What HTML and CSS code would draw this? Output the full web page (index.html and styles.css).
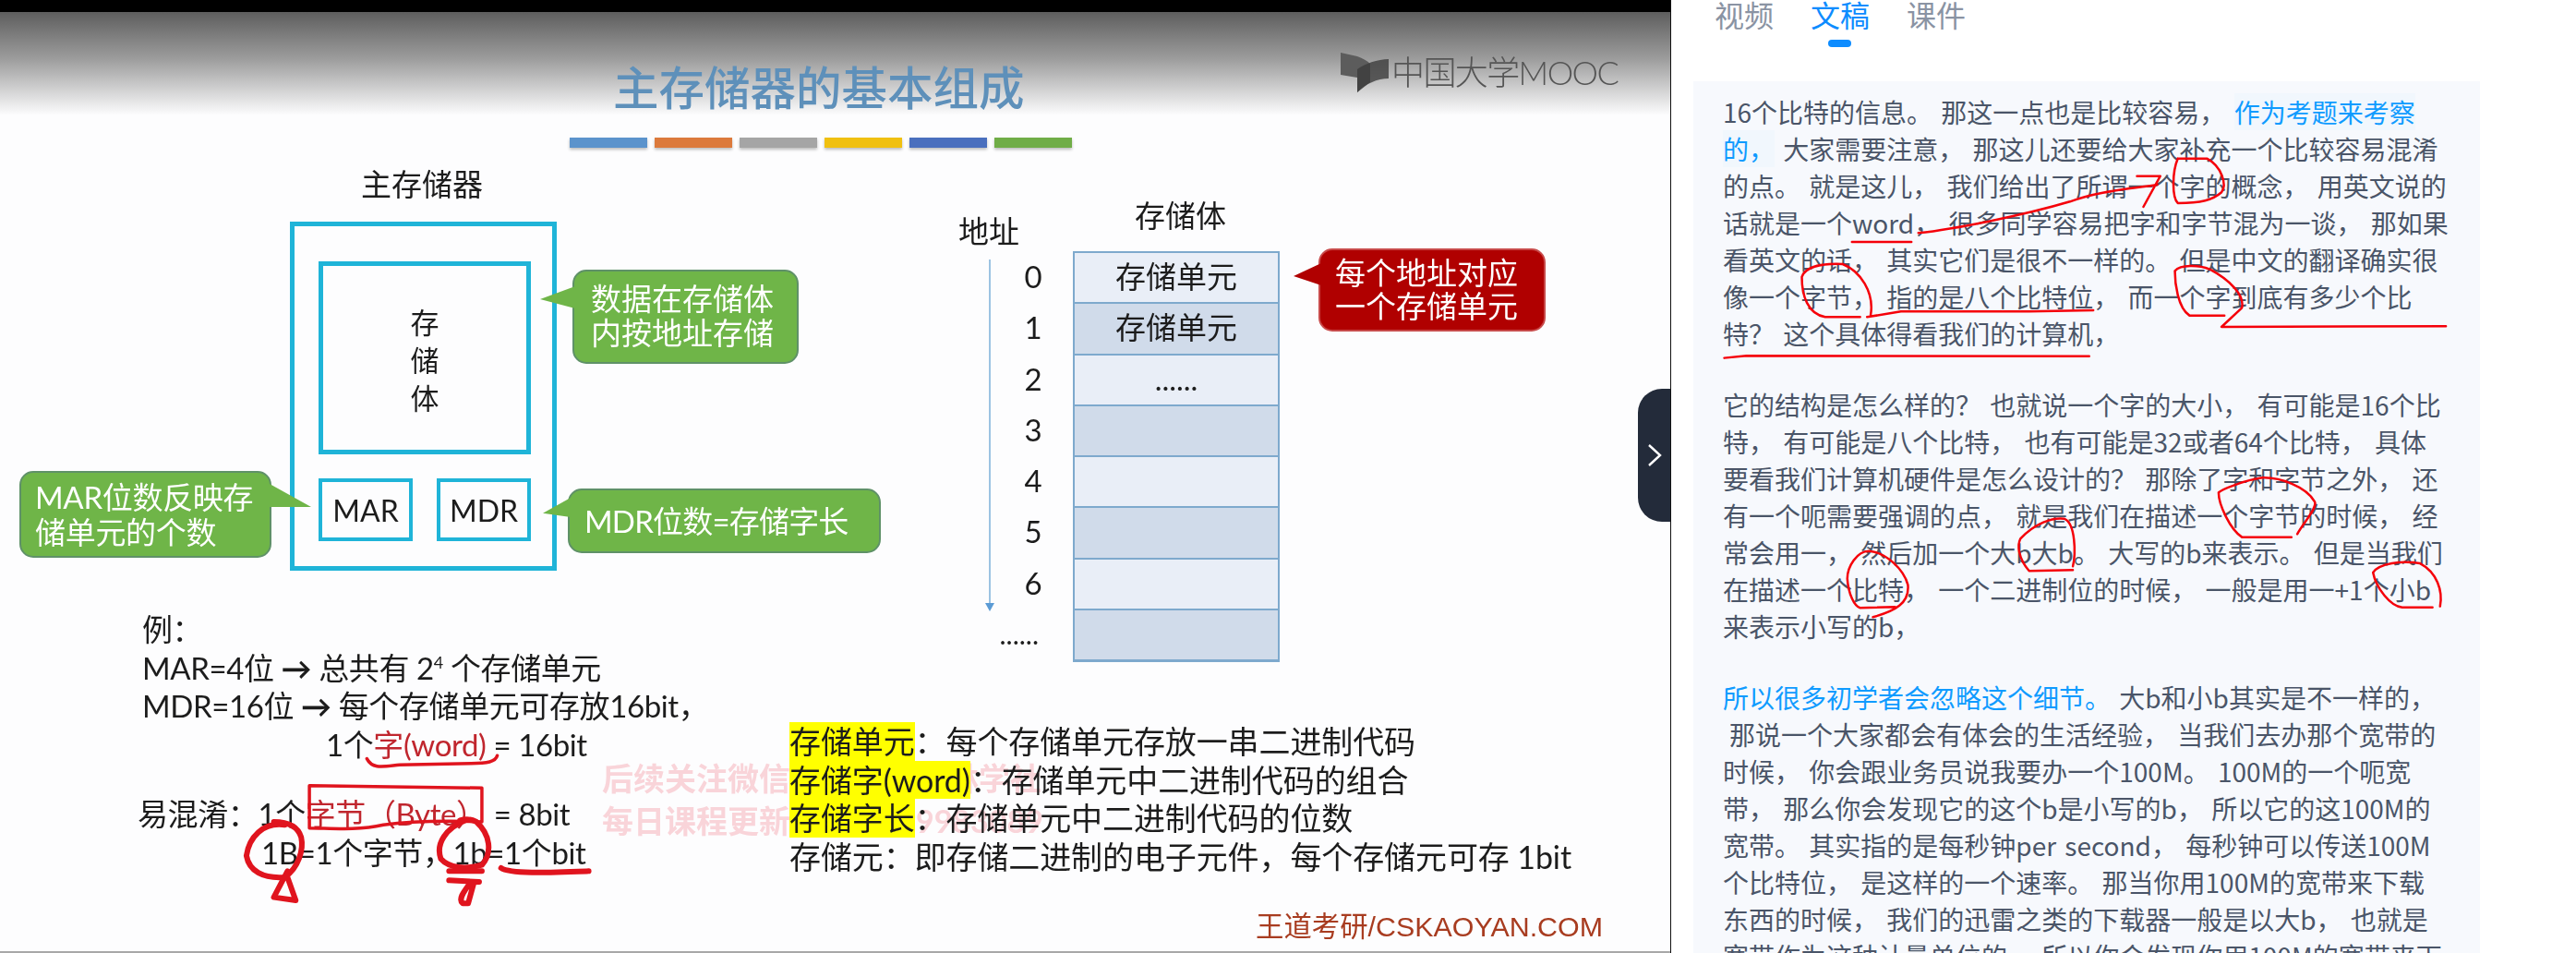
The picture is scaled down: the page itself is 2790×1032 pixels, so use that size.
FILE: index.html
```html
<!DOCTYPE html>
<html lang="zh">
<head>
<meta charset="utf-8">
<title>主存储器的基本组成</title>
<link rel="stylesheet" href="styles.css">
</head>
<body>
<div class="page">
  <section class="video">
    <div class="topbar"></div>
    <div class="slide">
      <div class="shade"></div>
      <h1 class="title">主存储器的基本组成</h1>
      <div class="bars"><i class="b1"></i><i class="b2"></i><i class="b3"></i><i class="b4"></i><i class="b5"></i><i class="b6"></i></div>
      <div class="logo">
        <svg class="logo-icon" viewBox="0 0 52 43"><path d="M0 0L18 4C24 6 29 9 32 12V32L18 43V27L0 24Z" fill="#5c5c5c"/><path d="M18 18C26 12 40 7 52 7V28C40 28 26 34 18 43Z" fill="#3c3c3c" fill-opacity=".8"/></svg>
        <span class="logo-text">中国大学MOOC</span>
      </div>

      <div class="label main-label">主存储器</div>
      <div class="outer"></div>
      <div class="inner">存<br>储<br>体</div>
      <div class="reg mar">MAR</div>
      <div class="reg mdr">MDR</div>
      <div class="callout c-data">数据在存储体<br>内按地址存储</div>
      <div class="callout c-mar">MAR位数反映存<br>储单元的个数</div>
      <div class="callout c-mdr">MDR位数=存储字长</div>

      <div class="label addr-label">地址</div>
      <div class="label store-label">存储体</div>
      <div class="axis"></div>
      <div class="addrs"><span>0</span><span>1</span><span>2</span><span>3</span><span>4</span><span>5</span><span>6</span><span class="more">......</span></div>
      <div class="cells">
        <div class="cell light">存储单元</div>
        <div class="cell dark">存储单元</div>
        <div class="cell light">......</div>
        <div class="cell dark"></div>
        <div class="cell light"></div>
        <div class="cell dark"></div>
        <div class="cell light"></div>
        <div class="cell dark"></div>
      </div>
      <div class="callout c-red">每个地址对应<br>一个存储单元</div>

      <div class="watermark">后续关注微信公众号：森林学社<br>每日课程更新加群:1289983089</div>

      <div class="example">
        <div>例：</div>
        <div>MAR=4位 <b>→</b> 总共有 2<sup>4</sup> 个存储单元</div>
        <div>MDR=16位 <b>→</b> 每个存储单元可存放16bit，</div>
        <div class="ind1">1个<em>字(word)</em> = 16bit</div>
        <div class="gap">易混淆：1个<em>字节（Byte）</em> = 8bit</div>
        <div class="ind2">1B=1个字节，1b=1个bit</div>
      </div>

      <div class="terms">
        <div><mark>存储单元</mark>：每个存储单元存放一串二进制代码</div>
        <div><mark>存储字(word)</mark>：存储单元中二进制代码的组合</div>
        <div><mark>存储字长</mark>：存储单元中二进制代码的位数</div>
        <div>存储元：即存储二进制的电子元件，每个存储元可存 1bit</div>
      </div>
      <div class="brand">王道考研/CSKAOYAN.COM</div>
    </div>
    <button class="handle" aria-label="收起"><svg viewBox="0 0 16 24"><path d="M2 1L14 12L2 23" fill="none" stroke="#fff" stroke-width="2.4"/></svg></button>
  </section>

  <aside class="side">
    <nav class="tabs">
      <a class="tab">视频</a>
      <a class="tab active">文稿</a>
      <a class="tab">课件</a>
    </nav>
    <div class="doc">
      <p>16个比特的信息。 那这一点也是比较容易， <span class="hl tint">作为考题来考察<br>的，</span> 大家需要注意， 那这儿还要给大家补充一个比较容易混淆<br>的点。 就是这儿， 我们给出了所谓一个字的概念， 用英文说的<br>话就是一个word， 很多同学容易把字和字节混为一谈， 那如果<br>看英文的话， 其实它们是很不一样的。 但是中文的翻译确实很<br>像一个字节， 指的是八个比特位， 而一个字到底有多少个比<br>特？ 这个具体得看我们的计算机，</p>
      <p>它的结构是怎么样的？ 也就说一个字的大小， 有可能是16个比<br>特， 有可能是八个比特， 也有可能是32或者64个比特， 具体<br>要看我们计算机硬件是怎么设计的？ 那除了字和字节之外， 还<br>有一个呃需要强调的点， 就是我们在描述一个字节的时候， 经<br>常会用一， 然后加一个大b大b。 大写的b来表示。 但是当我们<br>在描述一个比特， 一个二进制位的时候， 一般是用一+1个小b<br>来表示小写的b，</p>
      <p><span class="hl">所以很多初学者会忽略这个细节。</span> 大b和小b其实是不一样的，<br><span class="nudge">那说一个大家都会有体会的生活经验， 当我们去办那个宽带的</span><br>时候， 你会跟业务员说我要办一个100M。 100M的一个呃宽<br>带， 那么你会发现它的这个b是小写的b， 所以它的这100M的<br>宽带。 其实指的是每秒钟per second， 每秒钟可以传送100M<br>个比特位， 是这样的一个速率。 那当你用100M的宽带来下载<br>东西的时候， 我们的迅雷之类的下载器一般是以大b， 也就是<br>宽带作为这种计量单位的， 所以你会发现你用100M的宽带来下</p>
    </div>
  </aside>
</div>

<svg class="ink" viewBox="0 0 2790 1032" aria-hidden="true">
  <g transform="matrix(0.5931,0,0,0.3333,0,640)" class="pen-v">
    <path class="thin" d="M670 545C680 580 700 570 730 565L860 560C890 560 905 555 908 535"/>
    <path class="thin" d="M565 632L880 640L880 750C800 745 740 750 700 760C650 780 600 770 565 770Z"/>
    <path d="M520 760C480 750 455 800 450 860C455 910 480 935 520 930C545 900 555 840 550 800C545 770 530 750 500 750"/>
    <path d="M850 745C815 770 795 820 805 870C820 900 850 905 880 890C900 850 895 790 870 750C860 740 850 740 840 745"/>
    <path d="M915 900C930 920 1000 915 1075 910"/>
    <path d="M820 910L880 910M820 940L875 945M860 945C850 970 835 1000 845 1015L855 1015L865 950"/>
    <path d="M525 910L500 995L540 1005L525 930"/>
  </g>
  <g transform="matrix(0.6313,0,0,0.3333,1800,0)" class="pen-r">
    <path d="M326 786L428 786"/>
    <path d="M440 757C500 745 620 700 700 655C750 620 800 615 850 600M815 572L855 572L826 672"/>
    <path d="M885 515L935 515C960 540 970 600 960 625C945 650 925 660 885 660C875 640 875 560 885 515"/>
    <path d="M340 1030L280 1030C250 1020 240 960 240 900C245 870 270 855 310 858C340 880 365 950 358 1025M352 1030L410 1012L630 1012L740 1008"/>
    <path d="M965 1025L905 1025C885 1000 880 920 880 880C890 860 920 860 940 875C975 910 1000 960 995 1000L960 1062L1345 1060"/>
    <path d="M107 1163L145 1156L733 1157"/>
  </g>
  <g transform="matrix(0.6313,0,0,0.3333,1800,400)" class="pen-r">
    <path d="M1090 535C1100 500 1125 450 1120 430C1105 380 1060 350 1030 352C1000 360 960 390 955 400C955 440 975 520 995 545L1080 545"/>
    <path d="M705 652L630 655C610 610 610 570 615 550C640 500 670 480 690 485C710 500 710 600 705 640"/>
    <path d="M362 805C400 785 425 760 422 700C415 650 385 595 355 590C335 590 318 640 318 680C320 730 330 770 340 775L400 772"/>
    <path d="M1322 773L1270 773C1250 770 1225 710 1220 660C1230 630 1270 620 1300 630C1330 660 1340 720 1335 770"/>
  </g>
</svg>
</body>
</html>
```

FILE: styles.css
```css
* { box-sizing: border-box; }
html, body { margin: 0; padding: 0; }
body {
  position: relative;
  width: 2790px;
  height: 1032px;
  overflow: hidden;
  background: #fff;
  font-family: "Noto Sans CJK SC", sans-serif;
}
.page { display: flex; width: 2790px; height: 1032px; }

/* video */
.video {
  position: relative;
  flex: none;
  width: 1810px;
  height: 1032px;
  display: flex;
  flex-direction: column;
  border-right: 1px solid #111;
}
.topbar { flex: none; height: 13px; background: #000; }
.slide {
  position: relative;
  flex: 1;
  background: #fdfdfe;
  border-bottom: 2px solid #a8a8a8;
  font-family: Lato, "Noto Sans CJK SC", sans-serif;
  color: #1c1c1c;
  font-size: 33px;
  filter: blur(.6px);
}
.slide > * { position: absolute; }
.shade {
  left: 0; right: 0; top: 0; height: 112px;
  background: linear-gradient(#5e5e5e, #9c9c9c 45%, #fdfdfe);
}
.title {
  margin: 0;
  left: 664px; top: 47px;
  font-size: 49.5px;
  line-height: 70px;
  font-weight: 500;
  color: #5e90ba;
  white-space: nowrap;
}
.bars { left: 617px; top: 136px; display: flex; gap: 8px; }
.bars i { display: block; width: 84px; height: 11px; box-shadow: 0 2px 3px #bbb; }
.b1 { background: #5b93cc; }
.b2 { background: #dc7a3c; }
.b3 { background: #a5a5a5; }
.b4 { background: #f0c010; }
.b5 { background: #4a6fbe; }
.b6 { background: #70ad47; }
.logo { left: 1452px; top: 44px; display: flex; align-items: center; gap: 3px; color: #555; }
.logo-icon { width: 52px; height: 43px; }
.logo-text { font-size: 36px; line-height: 43px; font-weight: 300; letter-spacing: -1.6px; white-space: nowrap; }

.label { line-height: 40px; white-space: nowrap; }
.main-label { left: 391px; top: 166px; }
.addr-label { left: 1038px; top: 217px; }
.store-label { left: 1229px; top: 200px; }
.outer { left: 314px; top: 227px; width: 289px; height: 378px; border: 5px solid #1fb4d8; }
.inner {
  left: 345px; top: 270px; width: 230px; height: 209px;
  border: 5px solid #1fb4d8;
  padding-top: 41px;
  text-align: center;
  font-size: 31px;
  line-height: 41px;
}
.reg {
  top: 505px; width: 102px; height: 68px;
  border: 4px solid #1fb4d8;
  display: flex; align-items: center; justify-content: center;
  font-size: 32px;
}
.mar { left: 345px; }
.mdr { left: 473px; }
.callout { background: #6fb548; border: 2px solid #5f9168; border-radius: 15px; color: #fff; white-space: nowrap; letter-spacing: -.3px; }
.callout::before { content: ""; position: absolute; background: #6fb548; }
.c-data { left: 620px; top: 279px; width: 245px; height: 102px; padding: 11px 0 0 18px; line-height: 37px; letter-spacing: 0; }
.c-data::before { left: -37px; top: 16px; width: 38px; height: 24px; clip-path: polygon(100% 0, 0 58%, 100% 100%); }
.c-mar { left: 21px; top: 497px; width: 273px; height: 94px; padding: 7px 0 0 15px; line-height: 38px; }
.c-mar::before { left: 100%; top: 12px; width: 45px; height: 25px; clip-path: polygon(0 0, 100% 100%, 0 100%); }
.c-mdr { left: 615px; top: 516px; width: 339px; height: 70px; padding: 0 0 0 16px; line-height: 66px; letter-spacing: -.8px; }
.c-mdr::before { left: -29px; top: 8px; width: 30px; height: 21px; clip-path: polygon(100% 0, 0 80%, 100% 100%); }
.c-red { left: 1428px; top: 256px; width: 246px; height: 90px; background: #b00000; border-color: #c84a4a; padding: 6px 0 0 16px; line-height: 36px; letter-spacing: 0; }
.c-red::before { left: -29px; top: 14px; width: 30px; height: 24px; background: #b00000; clip-path: polygon(100% 0, 0 58%, 100% 100%); }

.axis { left: 1071px; top: 268px; width: 2px; height: 374px; background: #9cc3e2; }
.axis::after {
  content: ""; position: absolute; left: -4px; bottom: -7px;
  border-left: 5px solid transparent; border-right: 5px solid transparent; border-top: 9px solid #5b9bd5;
}
.addrs { left: 1100px; top: 259px; width: 38px; display: flex; flex-direction: column; }
.addrs span { height: 55.25px; line-height: 55px; text-align: center; }
.addrs .more { margin-left: -41px; width: 66px; line-height: 54px; font-size: 30px; text-align: right; }
.cells { left: 1162px; top: 259px; width: 224px; display: flex; flex-direction: column; border: 2px solid #7ea9cd; border-bottom-width: 1px; }
.cell { height: 55.25px; border-bottom: 2px solid #7ea9cd; text-align: center; line-height: 50px; }
.light { background: #e9eef7; }
.dark { background: #d0dbea; }

.watermark { left: 652px; top: 807px; font-size: 34px; line-height: 46px; font-weight: 700; color: #f9d4d9; white-space: nowrap; }

.example { left: 154px; top: 648px; line-height: 41.7px; white-space: nowrap; letter-spacing: -.4px; }
.example b { font-weight: 700; }
.example em { font-style: normal; color: #c0262e; }
.example sup { font-size: 18px; line-height: 0; }
.ind1 { padding-left: 199px; }
.gap { margin: 33px 0 0 -5px; }
.ind2 { padding-left: 129px; }

.terms { left: 855px; top: 769px; line-height: 41.7px; white-space: nowrap; font-size: 34px; letter-spacing: -.1px; }
.terms mark { display: inline-block; line-height: 41.7px; background: #ffff00; color: inherit; }
.brand { right: 73px; top: 972px; font-family: "Liberation Sans", "Noto Sans CJK SC", sans-serif; font-size: 30.4px; line-height: 36px; color: #a83c20; white-space: nowrap; }

.handle {
  position: absolute;
  right: 0; top: 421px;
  width: 35px; height: 144px;
  padding: 0;
  border: 0;
  border-radius: 26px 0 0 26px;
  background: #232b3a;
  display: flex; align-items: center; justify-content: center;
}
.handle svg { width: 16px; height: 24px; }

/* side panel */
.side { flex: 1; min-width: 0; color: #4a5568; }
.tabs { height: 88px; display: flex; gap: 40px; padding-left: 47px; overflow: hidden; }
.tab { position: relative; height: 52px; font-size: 32px; line-height: 30px; color: #8a93a3; }
.tab.active { color: #0d8cff; }
.tab.active::after {
  content: ""; position: absolute; left: 19px; top: 43px;
  width: 25px; height: 8px; border-radius: 4px; background: #0d8cff;
}
.doc {
  width: 852px;
  height: 944px;
  margin-left: 24px;
  padding: 13px 0 0 32px;
  background: #f7f9fd;
  overflow: hidden;
  font-size: 28px;
  line-height: 40px;
  white-space: nowrap;
  word-spacing: 3px;
  font-family: "Noto Sans CJK SC", sans-serif;
}
.doc p { margin: 0 0 37px; }
.hl { color: #0f9bff; }
.tint { background: #f1f7fd; }
.nudge { padding-left: 7px; }

/* handwriting overlay */
.ink { position: absolute; left: 0; top: 0; width: 2790px; height: 1032px; pointer-events: none; }
.ink path { fill: none; vector-effect: non-scaling-stroke; stroke-linecap: round; stroke-linejoin: round; }
.pen-v path { stroke: #e0141e; stroke-width: 6px; }
.pen-v path.thin { stroke-width: 3.5px; }
.pen-r path { stroke: #f5000a; stroke-width: 2.5px; }
```
